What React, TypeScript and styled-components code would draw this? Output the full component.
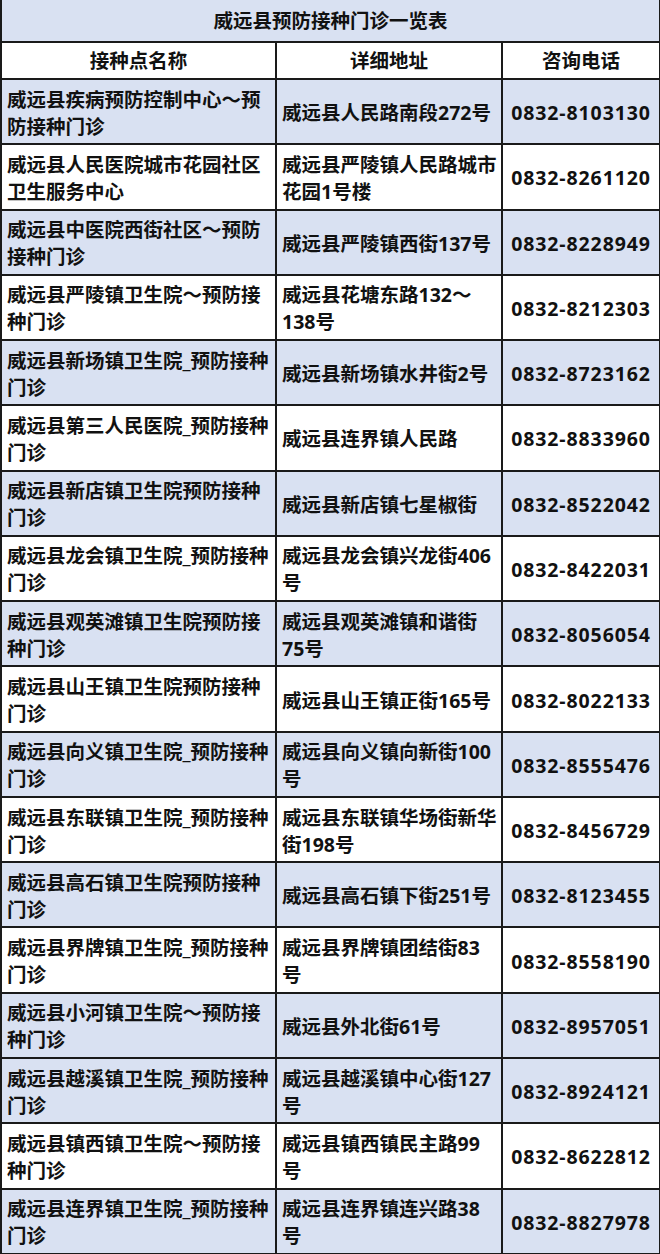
import React from "react";
import styled, { createGlobalStyle } from "styled-components";

const Global = createGlobalStyle`
  html, body { margin: 0; padding: 0; background: #ffffff; }
  body { width: 660px; overflow: hidden; }
`;

const BLUE = "#d9e1f2";
const LINE = "#1a1a1a";

const Table = styled.table`
  width: 659px;
  border-collapse: collapse;
  table-layout: fixed;
  font-family: "Open Sans", "Noto Sans CJK SC", sans-serif;
  font-weight: 700;
  font-size: 19.5px;
  color: #111;
  border-left: 2px solid ${LINE};
  border-right: 2px solid ${LINE};
  border-bottom: 2px solid ${LINE};
`;

const Row = styled.tr<{ $blue?: boolean; $h: number }>`
  background: ${(p) => (p.$blue ? BLUE : "#ffffff")};
  height: ${(p) => p.$h}px;
`;

const TitleCell = styled.td`
  text-align: center;
  vertical-align: middle;
  padding: 0;
  border-bottom: 2px solid ${LINE};
  line-height: 27px;
`;

const HeadCell = styled.th`
  text-align: center;
  vertical-align: middle;
  padding: 0;
  font-weight: 700;
  border: 2px solid ${LINE};
  line-height: 27px;
`;

const Cell = styled.td<{ $center?: boolean }>`
  text-align: ${(p) => (p.$center ? "center" : "left")};
  vertical-align: middle;
  padding: 2px 0 0 ${(p) => (p.$center ? 0 : 5)}px;
  border: 2px solid ${LINE};
  line-height: 27px;
  white-space: nowrap;
  overflow: hidden;
`;

const Phone = styled.span`
  letter-spacing: 0.9px;
`;

const Line = styled.div``;

type Item = { name: string[]; addr: string[]; tel: string; blue: boolean };

const rows: Item[] = [
  { name: ["威远县疾病预防控制中心～预", "防接种门诊"], addr: ["威远县人民路南段272号"], tel: "0832-8103130", blue: true },
  { name: ["威远县人民医院城市花园社区", "卫生服务中心"], addr: ["威远县严陵镇人民路城市", "花园1号楼"], tel: "0832-8261120", blue: false },
  { name: ["威远县中医院西街社区～预防", "接种门诊"], addr: ["威远县严陵镇西街137号"], tel: "0832-8228949", blue: true },
  { name: ["威远县严陵镇卫生院～预防接", "种门诊"], addr: ["威远县花塘东路132～", "138号"], tel: "0832-8212303", blue: false },
  { name: ["威远县新场镇卫生院_预防接种", "门诊"], addr: ["威远县新场镇水井街2号"], tel: "0832-8723162", blue: true },
  { name: ["威远县第三人民医院_预防接种", "门诊"], addr: ["威远县连界镇人民路"], tel: "0832-8833960", blue: false },
  { name: ["威远县新店镇卫生院预防接种", "门诊"], addr: ["威远县新店镇七星椒街"], tel: "0832-8522042", blue: true },
  { name: ["威远县龙会镇卫生院_预防接种", "门诊"], addr: ["威远县龙会镇兴龙街406", "号"], tel: "0832-8422031", blue: false },
  { name: ["威远县观英滩镇卫生院预防接", "种门诊"], addr: ["威远县观英滩镇和谐街", "75号"], tel: "0832-8056054", blue: true },
  { name: ["威远县山王镇卫生院预防接种", "门诊"], addr: ["威远县山王镇正街165号"], tel: "0832-8022133", blue: false },
  { name: ["威远县向义镇卫生院_预防接种", "门诊"], addr: ["威远县向义镇向新街100", "号"], tel: "0832-8555476", blue: true },
  { name: ["威远县东联镇卫生院_预防接种", "门诊"], addr: ["威远县东联镇华场街新华", "街198号"], tel: "0832-8456729", blue: false },
  { name: ["威远县高石镇卫生院预防接种", "门诊"], addr: ["威远县高石镇下街251号"], tel: "0832-8123455", blue: true },
  { name: ["威远县界牌镇卫生院_预防接种", "门诊"], addr: ["威远县界牌镇团结街83", "号"], tel: "0832-8558190", blue: false },
  { name: ["威远县小河镇卫生院～预防接", "种门诊"], addr: ["威远县外北街61号"], tel: "0832-8957051", blue: true },
  { name: ["威远县越溪镇卫生院_预防接种", "门诊"], addr: ["威远县越溪镇中心街127", "号"], tel: "0832-8924121", blue: true },
  { name: ["威远县镇西镇卫生院～预防接", "种门诊"], addr: ["威远县镇西镇民主路99", "号"], tel: "0832-8622812", blue: false },
  { name: ["威远县连界镇卫生院_预防接种", "门诊"], addr: ["威远县连界镇连兴路38", "号"], tel: "0832-8827978", blue: true },
];

export default function App() {
  return (
    <>
      <Global />
      <Table>
        <colgroup>
          <col style={{ width: 275 }} />
          <col style={{ width: 226 }} />
          <col style={{ width: 158 }} />
        </colgroup>
        <thead>
          <Row $blue $h={42}>
            <TitleCell colSpan={3}>威远县预防接种门诊一览表</TitleCell>
          </Row>
          <Row $h={37}>
            <HeadCell>接种点名称</HeadCell>
            <HeadCell>详细地址</HeadCell>
            <HeadCell>咨询电话</HeadCell>
          </Row>
        </thead>
        <tbody>
          {rows.map((r, i) => (
            <Row key={i} $blue={r.blue} $h={65.28}>
              <Cell>
                {r.name.map((t, j) => (
                  <Line key={j}>{t}</Line>
                ))}
              </Cell>
              <Cell>
                {r.addr.map((t, j) => (
                  <Line key={j}>{t}</Line>
                ))}
              </Cell>
              <Cell $center>
                <Phone>{r.tel}</Phone>
              </Cell>
            </Row>
          ))}
        </tbody>
      </Table>
    </>
  );
}
